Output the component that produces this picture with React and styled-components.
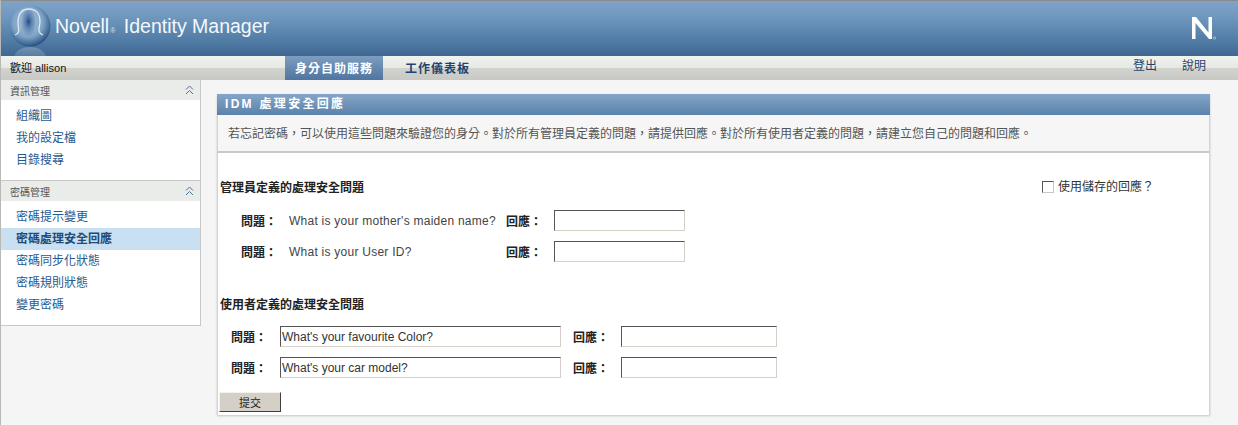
import React from "react";
import styled, { createGlobalStyle } from "styled-components";

const GlobalStyle = createGlobalStyle`
	html, body {
		margin: 0;
		padding: 0;
		background: #f5f5f5;
	}
	body {
		font-family: "Liberation Sans", "Noto Sans CJK TC", sans-serif;
		font-size: 11px;
		overflow: hidden;
	}
`;

const infoLinks = ["組織圖", "我的設定檔", "目錄搜尋"];
const passwordLinks = ["密碼提示變更", "密碼處理安全回應", "密碼同步化狀態", "密碼規則狀態", "變更密碼"];

const Chevrons = () => (
	<ChevronSvg width="9" height="10" viewBox="0 0 9 10">
		<path d="M1 4.5 L4.5 1 L8 4.5 M1 9 L4.5 5.5 L8 9" fill="none" stroke="#4d7298" strokeWidth="1" />
	</ChevronSvg>
);

const Logo = () => (
	<LogoSvg width="44" height="55" viewBox="0 0 44 55">
		<defs>
			<radialGradient id="orb" cx="45%" cy="40%" r="62%">
				<stop offset="0" stopColor="#a9c3dc" />
				<stop offset="0.6" stopColor="#7fa3c6" />
				<stop offset="0.88" stopColor="#3f6894" />
				<stop offset="1" stopColor="#1f4674" />
			</radialGradient>
			<radialGradient id="head" cx="50%" cy="45%" r="55%">
				<stop offset="0" stopColor="#1f4a86" />
				<stop offset="1" stopColor="#5f86b2" stopOpacity="0.2" />
			</radialGradient>
			<linearGradient id="mirror" x1="0" y1="0" x2="0" y2="1">
				<stop offset="0" stopColor="#a8c0d8" stopOpacity="0.4" />
				<stop offset="1" stopColor="#a8c0d8" stopOpacity="0" />
			</linearGradient>
		</defs>
		<circle cx="22" cy="25" r="20.5" fill="url(#orb)" />
		<ellipse cx="20.5" cy="22" rx="7" ry="13" fill="url(#head)" />
		<path
			d="M7 34 C13 32 10 27 10 22 C10 13 14 8 21 8 C28 8 32 13 32 21 C32 26 28 31 35 34"
			fill="none"
			stroke="#eef4f9"
			strokeWidth="1.3"
			opacity="0.85"
		/>
		<ellipse cx="22" cy="57" rx="16" ry="11" fill="url(#mirror)" />
	</LogoSvg>
);

const NovellN = () => (
	<BrandSvg width="26" height="24" viewBox="0 0 26 24">
		<path d="M1 1 H5 L17.5 16.5 V1 H21 V23 H18 L4.5 7 V23 H1 Z" fill="#fff" />
		<circle cx="23.5" cy="22" r="1.2" fill="none" stroke="#cfdce8" strokeWidth="0.6" />
	</BrandSvg>
);

const App = () => {
	return (
		<Page>
			<GlobalStyle />
			<Header>
				<Logo />
				<Title>
					Novell<Reg>®</Reg> Identity Manager
				</Title>
				<NovellN />
			</Header>
			<NavBar>
				<Welcome>
					歡迎 <span>allison</span>
				</Welcome>
				<Tabs>
					<Tab $active>身分自助服務</Tab>
					<Tab>工作儀表板</Tab>
				</Tabs>
				<NavLinks>
					<NavLink>登出</NavLink>
					<NavLink>說明</NavLink>
				</NavLinks>
			</NavBar>
			<Body>
				<Sidebar>
					<SideHead>
						<span>資訊管理</span>
						<Chevrons />
					</SideHead>
					<SideList $tail={9}>
						{infoLinks.map((link) => (
							<SideItem key={link}>{link}</SideItem>
						))}
					</SideList>
					<SideHead $divided>
						<span>密碼管理</span>
						<Chevrons />
					</SideHead>
					<SideList $tail={11}>
						{passwordLinks.map((link) => (
							<SideItem key={link} $active={link === "密碼處理安全回應"}>
								{link}
							</SideItem>
						))}
					</SideList>
				</Sidebar>
				<Main>
					<Card>
						<CardTitle>IDM 處理安全回應</CardTitle>
						<Intro>
							若忘記密碼，可以使用這些問題來驗證您的身分。對於所有管理員定義的問題，請提供回應。對於所有使用者定義的問題，請建立您自己的問題和回應。
						</Intro>
						<CardBody>
							<TopRow>
								<SectionTitle>管理員定義的處理安全問題</SectionTitle>
								<SavedLabel>
									<Check />
									使用儲存的回應？
								</SavedLabel>
							</TopRow>
							<AdminGrid>
								<Label>問題：</Label>
								<Question>What is your mother's maiden name?</Question>
								<Label>回應：</Label>
								<Input $w={131} />
								<Label>問題：</Label>
								<Question>What is your User ID?</Question>
								<Label>回應：</Label>
								<Input $w={131} />
							</AdminGrid>
							<SectionTitle $second>使用者定義的處理安全問題</SectionTitle>
							<UserGrid>
								<Label>問題：</Label>
								<Input $w={281} defaultValue="What's your favourite Color?" />
								<Label>回應：</Label>
								<Input $w={156} />
								<Label>問題：</Label>
								<Input $w={281} defaultValue="What's your car model?" />
								<Label>回應：</Label>
								<Input $w={156} />
							</UserGrid>
							<Submit>提交</Submit>
						</CardBody>
					</Card>
				</Main>
			</Body>
		</Page>
	);
};

export default App;

const Page = styled.div`
	width: 1238px;
	height: 425px;
	overflow: hidden;
	background: #f5f5f5;
	box-sizing: border-box;
	border-left: 1px solid #b8b8b4;
`;

const Header = styled.div`
	height: 55px;
	border-top: 1px solid #8a8a8a;
	margin-left: -1px;
	background: linear-gradient(to bottom, #7fa3c7 0%, #6f97be 30%, #4f7aa3 75%, #3f6791 100%);
	display: flex;
	align-items: flex-start;
	overflow: hidden;
`;

const LogoSvg = styled.svg`
	margin: 0 0 0 8px;
	flex: none;
`;

const Title = styled.div`
	margin: 11px 0 0 3px;
	font-size: 19.5px;
	line-height: 28px;
	color: #f4f8fb;
	flex: 1;
`;

const Reg = styled.span`
	font-size: 7px;
	margin: 0 3px 0 1px;
	color: #d6e2ee;
`;

const BrandSvg = styled.svg`
	margin: 15px 21px 0 0;
	flex: none;
`;

const NavBar = styled.div`
	height: 24px;
	margin-left: -1px;
	background: linear-gradient(to bottom, #f1f3ef 0%, #e6e8e4 50%, #d2d3cf 50%, #c8c9c4 100%);
	display: flex;
	align-items: stretch;
`;

const Welcome = styled.div`
	width: 285px;
	padding-left: 10px;
	box-sizing: border-box;
	font-size: 11px;
	line-height: 24px;
	color: #111;
`;

const Tabs = styled.div`
	display: flex;
	flex: 1;
`;

const Tab = styled.div`
	width: ${(p) => (p.$active ? "98px" : "auto")};
	padding-left: ${(p) => (p.$active ? "0" : "22px")};
	text-align: ${(p) => (p.$active ? "center" : "left")};
	font-size: 12px;
	font-weight: 700;
	letter-spacing: 1px;
	line-height: 27px;
	color: ${(p) => (p.$active ? "#fff" : "#1f4470")};
	background: ${(p) => (p.$active ? "linear-gradient(to bottom, #7d9dc0, #4f75a0)" : "none")};
`;

const NavLinks = styled.div`
	display: flex;
	gap: 25px;
	padding-right: 32px;
`;

const NavLink = styled.div`
	font-size: 12px;
	line-height: 20px;
	color: #1f4470;
`;

const Body = styled.div`
	display: flex;
	align-items: flex-start;
`;

const Sidebar = styled.div`
	width: 200px;
	flex: none;
	background: #fff;
	border-right: 1px solid #c8c8c8;
	border-bottom: 1px solid #c8c8c8;
	box-sizing: border-box;
	height: 246px;
`;

const SideHead = styled.div`
	height: 20px;
	padding: 0 6px 0 9px;
	display: flex;
	align-items: center;
	justify-content: space-between;
	background: #eaecea;
	color: #555;
	font-size: 10px;
	border-top: ${(p) => (p.$divided ? "1px solid #c8c8c8" : "none")};
`;

const ChevronSvg = styled.svg`
	flex: none;
`;

const SideList = styled.div`
	padding: 5px 0 ${(p) => p.$tail}px;
`;

const SideItem = styled.div`
	height: 22px;
	line-height: 22px;
	padding-left: 15px;
	font-size: 12px;
	font-weight: ${(p) => (p.$active ? 700 : 400)};
	color: ${(p) => (p.$active ? "#234a75" : "#1f5a92")};
	background: ${(p) => (p.$active ? "#c9dff2" : "none")};
`;

const Main = styled.div`
	flex: 1;
	padding: 14px 0 0 16px;
`;

const Card = styled.div`
	width: 993px;
	background: #fff;
	box-shadow: 0 1px 2px #c4c4c4;
`;

const CardTitle = styled.div`
	height: 21px;
	line-height: 21px;
	padding-left: 8px;
	color: #fff;
	font-size: 12px;
	font-weight: 700;
	letter-spacing: 2.3px;
	background: linear-gradient(to bottom, #84a6c9, #5a82aa);
`;

const Intro = styled.div`
	height: 38px;
	line-height: 38px;
	box-sizing: border-box;
	padding-left: 10px;
	color: #555;
	font-size: 12px;
	white-space: nowrap;
	background: repeating-conic-gradient(#f3f3f3 0 25%, #f9f9f9 0 50%) 0 0 / 2px 2px;
	border-bottom: 2px solid #c6cad0;
	border-left: 1px solid #d4d4d4;
	border-right: 1px solid #d4d4d4;
`;

const CardBody = styled.div`
	padding: 27px 0 3px 2px;
	border-left: 1px solid #d4d4d4;
	border-right: 1px solid #d4d4d4;
`;

const TopRow = styled.div`
	display: flex;
	justify-content: space-between;
	align-items: flex-start;
`;

const SectionTitle = styled.div`
	font-size: 12px;
	line-height: 16px;
	font-weight: 700;
	color: #222;
	margin-top: ${(p) => (p.$second ? "35px" : "0")};
`;

const SavedLabel = styled.label`
	display: flex;
	align-items: center;
	gap: 4px;
	font-size: 12px;
	line-height: 14px;
	color: #333;
	margin-right: 55px;
`;

const Check = styled.span`
	width: 12px;
	height: 12px;
	box-sizing: border-box;
	border: 1px solid #555;
	border-right-color: #c8c8c0;
	border-bottom-color: #c8c8c0;
	background: #fff;
`;

const AdminGrid = styled.div`
	display: grid;
	grid-template-columns: 48px 217px 48px auto;
	row-gap: 10px;
	align-items: center;
	justify-content: start;
	margin: 14px 0 0 21px;
`;

const UserGrid = styled.div`
	display: grid;
	grid-template-columns: 49px 281px 60px auto;
	row-gap: 10px;
	align-items: center;
	justify-content: start;
	margin: 13px 0 0 11px;
	& > :nth-child(4n + 3) {
		padding-left: 12px;
	}
`;

const Label = styled.div`
	font-size: 12px;
	font-weight: 700;
	color: #222;
	white-space: nowrap;
`;

const Question = styled.div`
	font-size: 12px;
	color: #444;
	white-space: nowrap;
	letter-spacing: 0.25px;
`;

const Input = styled.input`
	width: ${(p) => p.$w}px;
	height: 21px;
	box-sizing: border-box;
	padding: 0 1px;
	background: #fff;
	font-family: "Liberation Sans", sans-serif;
	font-size: 12px;
	color: #333;
	border: 1px solid #d4d0c8;
	border-top-color: #555;
	border-left-color: #555;
	outline: none;
`;

const Submit = styled.button`
	display: block;
	margin: 14px 0 0 -1px;
	width: 62px;
	height: 20px;
	padding: 0;
	background: #d4d0c8;
	font-family: "Noto Sans CJK TC", sans-serif;
	font-size: 11px;
	color: #222;
	border: 1px solid #d4d0c8;
	border-right-color: #404040;
	border-bottom-color: #404040;
	border-top-color: #f4f2ec;
	border-left-color: #f4f2ec;
`;
